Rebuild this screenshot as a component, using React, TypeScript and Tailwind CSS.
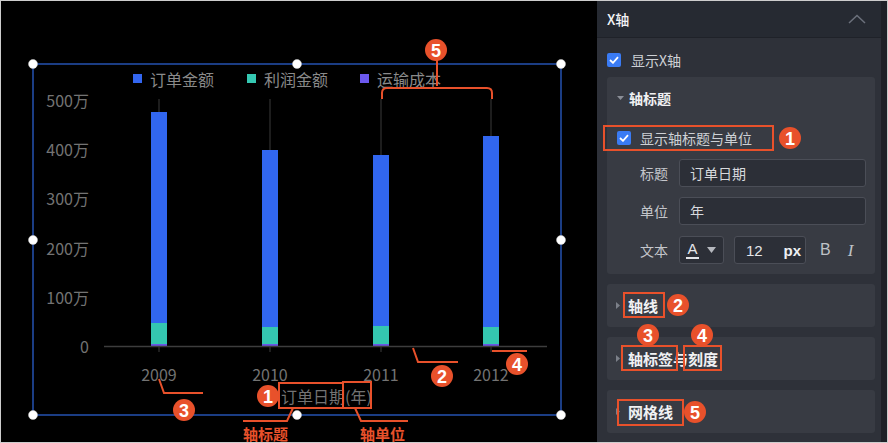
import React from "react";

const FONT = '"Noto Sans CJK SC", "Noto Sans", sans-serif';
const RED = "#e8512b";

function Check() {
  return (
    <div className="w-[14px] h-[14px] rounded-[2px] bg-[#3a7bf4] flex items-center justify-center shrink-0">
      <svg width="10" height="8" viewBox="0 0 10 8">
        <polyline points="1,4 4,6.8 9,1.2" fill="none" stroke="#fff" strokeWidth="1.8" />
      </svg>
    </div>
  );
}

function TriRight() {
  return (
    <svg width="4" height="7" viewBox="0 0 4 7" className="shrink-0">
      <polygon points="0,0 4,3.5 0,7" fill="#7c8089" />
    </svg>
  );
}

function Chart() {
  const bars = [
    { cx: 159, top: 112, teal: 323 },
    { cx: 270, top: 150, teal: 327 },
    { cx: 381, top: 155, teal: 326 },
    { cx: 491, top: 136, teal: 327 },
  ];
  const yl = [
    ["500万", 100],
    ["400万", 149],
    ["300万", 198],
    ["200万", 248],
    ["100万", 297],
    ["0", 346],
  ];
  const handles = [
    [33, 64], [297, 64], [561, 64],
    [33, 240], [561, 240],
    [33, 415], [297, 415], [561, 415],
  ];
  return (
    <svg width="596" height="441" viewBox="1 1 596 441" style={{ fontFamily: FONT }}>
      <rect x="133" y="74" width="9" height="9" fill="#3366f0" />
      <text x="150" y="79" fontSize="16" fill="#8a8a8a" dominantBaseline="central">订单金额</text>
      <rect x="247" y="74" width="9" height="9" fill="#35c8b2" />
      <text x="264" y="79" fontSize="16" fill="#8a8a8a" dominantBaseline="central">利润金额</text>
      <rect x="360" y="74" width="9" height="9" fill="#6b58ee" />
      <text x="377" y="79" fontSize="16" fill="#8a8a8a" dominantBaseline="central">运输成本</text>
      {yl.map(([t, y]) => (
        <text key={t as string} x="89" y={y as number} fontSize="16" fill="#737373" textAnchor="end" dominantBaseline="central">
          {t}
        </text>
      ))}
      {bars.map((b) => (
        <g key={b.cx}>
          <line x1={b.cx} y1="99" x2={b.cx} y2={b.top} stroke="#3a3a3a" strokeWidth="1" />
          <rect x={b.cx - 8} y={b.top} width="16" height={b.teal - b.top} fill="#3166ef" />
          <rect x={b.cx - 8} y={b.teal} width="16" height={344 - b.teal} fill="#34c6b0" />
          <rect x={b.cx - 8} y="344" width="16" height="2" fill="#6a55e6" />
          <line x1={b.cx} y1="347" x2={b.cx} y2="352" stroke="#3d3d3d" strokeWidth="1" />
        </g>
      ))}
      <line x1="104" y1="346.5" x2="547" y2="346.5" stroke="#3d3d3d" strokeWidth="1.5" />
      {["2009", "2010", "2011", "2012"].map((t, i) => (
        <text key={t} x={bars[i].cx} y="374" fontSize="16" fill="#737373" textAnchor="middle" dominantBaseline="central">
          {t}
        </text>
      ))}
      <text x="281" y="396" fontSize="16" fill="#737373" dominantBaseline="central">订单日期(年)</text>
      <rect x="33" y="64" width="528" height="351" fill="none" stroke="#2452b0" strokeWidth="1.5" />
      {handles.map(([x, y]) => (
        <circle key={`${x}-${y}`} cx={x} cy={y} r="4.5" fill="#fff" stroke="#d0d0d0" strokeWidth="0.5" />
      ))}
    </svg>
  );
}

function Badge({ x, y, n }: { x: number; y: number; n: number }) {
  return (
    <g>
      <circle cx={x} cy={y} r="11" fill={RED} />
      <text
        x={x}
        y={y + 1}
        fontSize="18"
        fontWeight="bold"
        fill="#fff"
        textAnchor="middle"
        dominantBaseline="central"
        style={{ fontFamily: '"Liberation Sans", Arial, sans-serif' }}
      >
        {n}
      </text>
    </g>
  );
}

function Overlay() {
  return (
    <svg
      className="absolute left-0 top-0 pointer-events-none"
      width="888"
      height="443"
      viewBox="0 0 888 443"
      style={{ fontFamily: FONT }}
    >
      <g fill="none" stroke={RED} strokeWidth="2">
        <rect x="279" y="383" width="64" height="25" />
        <rect x="343" y="382" width="28" height="26" />
        <polyline points="293,408 287,421 243,421" />
        <polyline points="355,408 361,421 408,421" />
        <polyline points="159,379 164,393 203,393" />
        <polyline points="413,348 418,362 458,362" />
        <polyline points="492,351 527,351" />
        <path d="M437,60 V86 M382,99 V93 Q382,88 387,88 H487 Q492,88 492,93 V99" />
        <rect x="604" y="126" width="169" height="24" />
        <rect x="624" y="293" width="40" height="24" />
        <rect x="622" y="346" width="55" height="24" />
        <rect x="684" y="346" width="37" height="24" />
        <rect x="618" y="400" width="65" height="25" />
      </g>
      <text x="243" y="433" fontSize="15" fontWeight="bold" fill={RED} dominantBaseline="central">轴标题</text>
      <text x="360" y="433" fontSize="15" fontWeight="bold" fill={RED} dominantBaseline="central">轴单位</text>
      <Badge x={268} y={396} n={1} />
      <Badge x={184} y={410} n={3} />
      <Badge x={442} y={376} n={2} />
      <Badge x={517} y={364} n={4} />
      <Badge x={436} y={50} n={5} />
      <Badge x={790} y={138} n={1} />
      <Badge x={678} y={305} n={2} />
      <Badge x={648} y={335} n={3} />
      <Badge x={702} y={335} n={4} />
      <Badge x={695} y={412} n={5} />
    </svg>
  );
}

function Row({ label, children }: { label: string; children: React.ReactNode }) {
  return (
    <div className="h-[28px] flex items-center pl-[33px] pr-[9px]">
      <div className="w-[39px] text-[14px] text-[#c4c6cb] leading-none">{label}</div>
      {children}
    </div>
  );
}

function Panel() {
  return (
    <div className="w-[284px] h-full bg-[#2e3139] flex flex-col">
      <div className="h-[37px] bg-[#262a32] border-b border-[#1f2229] flex items-center justify-between pl-[10px] pr-[15px] shrink-0">
        <span className="text-[14px] text-[#f2f3f5] font-medium leading-none">X轴</span>
        <svg width="18" height="10" viewBox="0 0 18 10">
          <polyline points="1,9 9,1.5 17,9" fill="none" stroke="#6c717c" strokeWidth="1.5" />
        </svg>
      </div>
      <div className="pl-[10px] pr-[6px]">
        <div className="h-[20px] mt-[12px] flex items-center gap-[10px]">
          <Check />
          <span className="text-[14px] text-[#cdd0d5] leading-none">显示X轴</span>
        </div>
        <div className="mt-[7px] bg-[#383b43] rounded-[3px] pb-[10px]">
          <div className="h-[42px] flex items-center pl-[10px] gap-[5px]">
            <svg width="7" height="4" viewBox="0 0 7 4" className="shrink-0">
              <polygon points="0,0 7,0 3.5,4" fill="#8a8e97" />
            </svg>
            <span className="text-[14px] text-[#f0f1f3] font-bold leading-none">轴标题</span>
          </div>
          <div className="mt-[9px] h-[20px] flex items-center pl-[10px] gap-[9px]">
            <Check />
            <span className="text-[14px] text-[#cdd0d5] leading-none">显示轴标题与单位</span>
          </div>
          <div className="mt-[11px]">
            <Row label="标题">
              <div className="flex-1 h-[28px] rounded-[3px] border border-[#4b4e57] bg-[#2c2f37] flex items-center pl-[10px] text-[14px] text-[#d8dade]">
                订单日期
              </div>
            </Row>
          </div>
          <div className="mt-[10px]">
            <Row label="单位">
              <div className="flex-1 h-[28px] rounded-[3px] border border-[#4b4e57] bg-[#2c2f37] flex items-center pl-[10px] text-[14px] text-[#d8dade]">
                年
              </div>
            </Row>
          </div>
          <div className="mt-[11px]">
            <Row label="文本">
              <div className="w-[45px] h-[28px] rounded-[3px] border border-[#4b4e57] bg-[#2c2f37] flex items-center pl-[6px] gap-[8px]">
                <div className="flex flex-col items-center">
                  <span className="text-[15px] leading-none text-[#e4e6ea] font-medium" style={{ fontFamily: '"Liberation Sans", Arial, sans-serif' }}>A</span>
                  <div className="w-[13px] h-[2px] bg-[#e4e6ea] mt-[1px]" />
                </div>
                <svg width="9" height="6" viewBox="0 0 9 6">
                  <polygon points="0,0 9,0 4.5,6" fill="#b5b8be" />
                </svg>
              </div>
              <div className="ml-[10px] w-[72px] h-[28px] rounded-[3px] border border-[#4b4e57] bg-[#2c2f37] flex items-center justify-between pl-[11px] pr-[4px]" style={{ fontFamily: '"Liberation Sans", Arial, sans-serif' }}>
                <span className="text-[15px] text-[#e4e6ea] leading-none">12</span>
                <span className="text-[15px] text-[#eef0f3] font-bold leading-none">px</span>
              </div>
              <span className="ml-[14px] text-[16px] text-[#bfc2c7] leading-none" style={{ fontFamily: '"Liberation Sans", Arial, sans-serif' }}>B</span>
              <span className="ml-[17px] text-[17px] text-[#bfc2c7] italic leading-none" style={{ fontFamily: '"Liberation Serif", serif' }}>I</span>
            </Row>
          </div>
        </div>
        {["轴线", "轴标签与刻度", "网格线"].map((t) => (
          <div key={t} className="mt-[10px] h-[43px] bg-[#383b43] rounded-[3px] flex items-center pl-[9px] gap-[8px]">
            <TriRight />
            <span className="text-[15px] text-[#f0f1f3] font-bold leading-none">{t}</span>
          </div>
        ))}
      </div>
    </div>
  );
}

export default function App() {
  return (
    <div className="relative w-[888px] h-[443px] overflow-hidden" style={{ fontFamily: FONT }}>
      <div className="w-[888px] h-[443px] border border-[#cdcdcd] flex">
        <div className="w-[596px] h-full bg-black">
          <Chart />
        </div>
        <Panel />
        <div className="w-[6px] h-full bg-[#1e2127]" />
      </div>
      <Overlay />
    </div>
  );
}
